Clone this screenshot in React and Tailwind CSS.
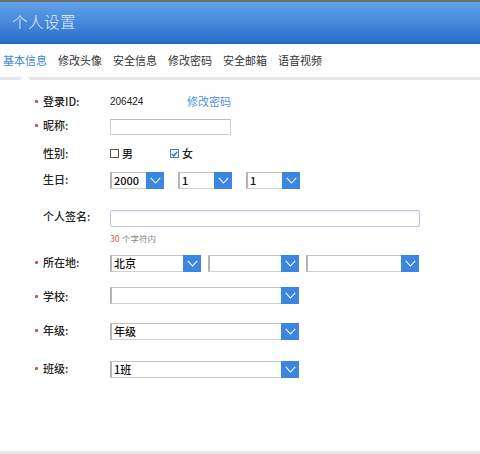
import React from 'react';

const cjk = { fontFamily: '"Noto Sans CJK SC", "Liberation Sans", sans-serif' };

const Chevron = () => (
  <svg width="11" height="7" viewBox="0 0 11 7" fill="none">
    <path d="M0.8 0.8 L5.5 6 L10.2 0.8" stroke="#ffffff" strokeWidth="1.1" />
  </svg>
);

const Select = ({ width, value }) => (
  <div
    className="flex h-[17px] shrink-0 border border-[#d0d0d0] border-l-[2px] border-l-[#b4b4b4] border-t-[#c4c4c4] bg-white"
    style={{ width }}
  >
    <div className="flex-1 flex items-center pl-[2px] text-[11px] text-[#111] leading-none font-medium">{value}</div>
    <div className="w-[18px] -my-px -mr-px bg-[#3a86e0] flex items-center justify-center">
      <Chevron />
    </div>
  </div>
);

const Label = ({ req, children, className = '' }) => (
  <div className={`w-[75px] shrink-0 flex items-center h-[13px] text-[11px] leading-[13px] text-[#222] ${className}`}>
    <span className="w-[8px] flex items-center">
      {req && <span className="w-[3px] h-[3px] rounded-[1px] bg-[#e8405a]" />}
    </span>
    <span className="font-medium">{children}</span>
  </div>
);

const tabs = ['基本信息', '修改头像', '安全信息', '修改密码', '安全邮箱', '语音视频'];

export default function App() {
  return (
    <div className="w-[480px] h-[454px] bg-white flex flex-col overflow-hidden" style={cjk}>
      <div className="h-[2px] bg-[#6b6b6b]" />
      <div className="h-[42px] bg-gradient-to-b from-[#62a2ea] to-[#2a70cb] border-b-2 border-[#2866b8] flex items-center pl-[12px]">
        <span className="text-[15.5px] text-[#e4edf9] font-light tracking-[0.5px]">个人设置</span>
      </div>
      <div className="relative h-[36px] flex items-center pl-[3px] gap-[11px] border-b-[3px] border-[#e6e6e6]">
        {tabs.map((t, i) => (
          <span key={t} className={`text-[11px] ${i === 0 ? 'text-[#3a86d6]' : 'text-[#333]'}`}>{t}</span>
        ))}
        <div className="absolute left-[20px] -bottom-[3px] w-0 h-0 border-l-[5px] border-r-[5px] border-b-[5px] border-l-transparent border-r-transparent border-b-white" />
      </div>

      <div className="flex-1 flex flex-col pl-[35px]">
        <div className="flex mt-[15px] h-[13px] items-start">
          <Label req>登录ID:</Label>
          <span className="text-[10px] leading-[13px] text-[#222] w-[77px]" style={{ fontFamily: '"Liberation Sans", sans-serif' }}>206424</span>
          <span className="text-[11px] leading-[13px] text-[#4b92dc]">修改密码</span>
        </div>

        <div className="flex mt-[11px] h-[16px] items-start">
          <Label req>昵称:</Label>
          <div className="w-[121px] h-[16px] border border-[#cfcfcf] border-t-[#bdbdbd] bg-white" />
        </div>

        <div className="flex mt-[12px] h-[13px] items-center">
          <Label>性别:</Label>
          <div className="flex items-center w-[60px] gap-[3px]">
            <span className="w-[9px] h-[9px] border border-[#555] bg-white" />
            <span className="text-[11px] leading-[13px] text-[#222] font-medium">男</span>
          </div>
          <div className="flex items-center gap-[3px]">
            <span className="w-[9px] h-[9px] border border-[#4a7fc0] bg-[#eef4fc] flex items-center justify-center">
              <svg width="7" height="6" viewBox="0 0 7 6" fill="none"><path d="M0.8 3 L2.8 5 L6.2 0.8" stroke="#2e67b8" strokeWidth="1.2" /></svg>
            </span>
            <span className="text-[11px] leading-[13px] text-[#222] font-medium">女</span>
          </div>
        </div>

        <div className="flex mt-[12px] h-[17px] items-start">
          <Label className="mt-[1px]">生日:</Label>
          <div className="flex gap-[14px]">
            <Select width={54} value="2000" />
            <Select width={54} value="1" />
            <Select width={54} value="1" />
          </div>
        </div>

        <div className="flex mt-[21px] h-[17px] items-start">
          <Label>个人签名:</Label>
          <div className="w-[310px] h-[17px] border border-[#b9c9da] rounded-[2px] bg-white shadow-[inset_0_1px_2px_rgba(0,0,0,0.08)]" />
        </div>

        <div className="flex mt-[6px] h-[10px] pl-[75px] items-center text-[8.5px] leading-[10px]">
          <span className="text-[#e8503f] w-[12px]">30</span>
          <span className="text-[#888]">个字符内</span>
        </div>

        <div className="flex mt-[12px] h-[17px] items-start">
          <Label req className="mt-[1px]">所在地:</Label>
          <div className="flex gap-[7px]">
            <Select width={91} value="北京" />
            <Select width={91} value="" />
            <Select width={113} value="" />
          </div>
        </div>

        <div className="flex mt-[15px] h-[17px] items-start">
          <Label req className="mt-[3px]">学校:</Label>
          <Select width={189} value="" />
        </div>

        <div className="flex mt-[19px] h-[17px] items-start">
          <Label req className="mt-[1px]">年级:</Label>
          <Select width={189} value="年级" />
        </div>

        <div className="flex mt-[21px] h-[17px] items-start">
          <Label req className="mt-[1px]">班级:</Label>
          <Select width={189} value="1班" />
        </div>
      </div>
      <div className="h-[3px] bg-[#e8e8e8]" />
    </div>
  );
}
